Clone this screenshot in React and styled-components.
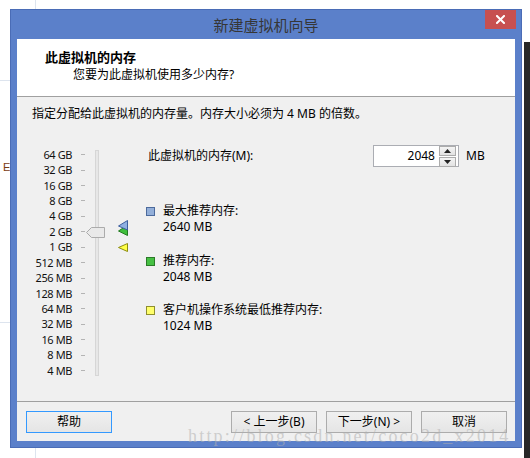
import React from "react";
import styled, { createGlobalStyle } from "styled-components";

const GlobalStyle = createGlobalStyle`
  html, body {
    margin: 0;
    padding: 0;
    background: #fff;
    overflow: hidden;
  }
  body {
    font-family: "Noto Sans", "Noto Sans CJK SC", sans-serif;
    font-size: 12px;
    color: #000;
  }
`;

const SIZES = [
  "64 GB", "32 GB", "16 GB", "8 GB", "4 GB", "2 GB", "1 GB",
  "512 MB", "256 MB", "128 MB", "64 MB", "32 MB", "16 MB", "8 MB", "4 MB",
];

const LEGEND = [
  { label: "最大推荐内存:", value: "2640 MB", fill: "#93afd9", edge: "#4c6a9c" },
  { label: "推荐内存:", value: "2048 MB", fill: "#46c043", edge: "#2b7a28" },
  { label: "客户机操作系统最低推荐内存:", value: "1024 MB", fill: "#ffff6a", edge: "#8f8f2e" },
];

function CloseIcon() {
  return (
    <svg width="9" height="9" viewBox="0 0 9 9">
      <path d="M1 1 L8 8 M8 1 L1 8" stroke="#fff" strokeWidth="2" strokeLinecap="square" />
    </svg>
  );
}

function Thumb() {
  return (
    <svg width="19" height="11" viewBox="0 0 19 11">
      <polygon points="0.5,5.5 5.5,0.5 18.5,0.5 18.5,10.5 5.5,10.5" fill="#e9e9e9" stroke="#ababab" />
    </svg>
  );
}

function MaxMarker() {
  return (
    <svg width="10" height="16" viewBox="0 0 10 16">
      <polygon points="9.5,5 0.5,11 9.5,15.5" fill="#3fbf3c" stroke="#237a20" />
      <polygon points="9.5,0.5 0.5,6 9.5,10" fill="#8fb0e2" stroke="#3d5f9e" />
    </svg>
  );
}

function MinMarker() {
  return (
    <svg width="10" height="9" viewBox="0 0 10 9">
      <polygon points="9.5,0.5 0.5,4.5 9.5,8.5" fill="#ffff45" stroke="#8c8c10" />
    </svg>
  );
}

function SpinArrow({ up }) {
  return (
    <svg width="7" height="4" viewBox="0 0 7 4">
      <polygon points={up ? "0,4 3.5,0 7,4" : "0,0 3.5,4 7,0"} fill="#222" />
    </svg>
  );
}

export default function App() {
  return (
    <Page>
      <GlobalStyle />
      <Stray>E</Stray>
      <Window>
        <TitleBar>
          <Title>新建虚拟机向导</Title>
          <CloseButton>
            <CloseIcon />
          </CloseButton>
        </TitleBar>
        <Content>
          <Header>
            <HeaderTitle>此虚拟机的内存</HeaderTitle>
            <HeaderSub>您要为此虚拟机使用多少内存?</HeaderSub>
          </Header>
          <Body>
            <Intro>指定分配给此虚拟机的内存量。内存大小必须为 4 MB 的倍数。</Intro>
            <Main>
              <SliderArea>
                <Scale>
                  {SIZES.map((s) => (
                    <ScaleRow key={s}>
                      <ScaleLabel>{s}</ScaleLabel>
                      <Tick />
                    </ScaleRow>
                  ))}
                </Scale>
                <Track>
                  <ThumbSlot>
                    <Thumb />
                  </ThumbSlot>
                </Track>
                <Markers>
                  <MaxMarker />
                  <MinSlot>
                    <MinMarker />
                  </MinSlot>
                </Markers>
              </SliderArea>
              <RightPane>
                <MemoryRow>
                  <MemoryLabel>此虚拟机的内存(M):</MemoryLabel>
                  <Spinner>
                    <SpinValue>2048</SpinValue>
                    <SpinButtons>
                      <SpinButton>
                        <SpinArrow up />
                      </SpinButton>
                      <SpinButton>
                        <SpinArrow />
                      </SpinButton>
                    </SpinButtons>
                  </Spinner>
                  <Unit>MB</Unit>
                </MemoryRow>
                <Legend>
                  {LEGEND.map((item) => (
                    <LegendItem key={item.label}>
                      <Swatch $fill={item.fill} $edge={item.edge} />
                      <LegendText>
                        <div>{item.label}</div>
                        <div>{item.value}</div>
                      </LegendText>
                    </LegendItem>
                  ))}
                </Legend>
              </RightPane>
            </Main>
          </Body>
          <Footer>
            <Button $focused>帮助</Button>
            <Spacer />
            <ButtonGroup>
              <Button>&lt; 上一步(B)</Button>
              <Button>下一步(N) &gt;</Button>
              <Button>取消</Button>
            </ButtonGroup>
          </Footer>
        </Content>
      </Window>
      <BackWindow />
      <Watermark>http://blog.csdn.net/coco2d_x2014</Watermark>
    </Page>
  );
}

const Page = styled.div`
  position: relative;
  width: 530px;
  height: 458px;
  overflow: hidden;
  display: flex;
  align-items: flex-start;
  background:
    linear-gradient(#dde4ee, #dde4ee) 35px 0 / 1px 100% no-repeat,
    linear-gradient(#dde4ee, #dde4ee) 0 80px / 10px 1px no-repeat,
    linear-gradient(#dde4ee, #dde4ee) 0 322px / 10px 1px no-repeat,
    #fff;
`;

const Stray = styled.span`
  position: absolute;
  left: 3px;
  top: 161px;
  font-family: "Liberation Sans", sans-serif;
  font-size: 11px;
  color: #7a3b12;
`;

const Window = styled.div`
  margin: 9px 0 0 10px;
  width: 512px;
  height: 439px;
  box-sizing: border-box;
  border: 1px solid #4a6cb6;
  background: #5b80ca;
  padding: 0 6px 6px 6px;
  display: flex;
  flex-direction: column;
`;

const TitleBar = styled.div`
  height: 29px;
  display: grid;
  grid-template-columns: 1fr auto 1fr;
  align-items: center;
`;

const Title = styled.div`
  grid-column: 2;
  font-size: 15px;
  line-height: 20px;
  color: #363636;
`;

const CloseButton = styled.div`
  grid-column: 3;
  justify-self: end;
  align-self: start;
  margin-right: -1px;
  width: 31px;
  height: 19px;
  background: #c75050;
  display: flex;
  align-items: center;
  justify-content: center;
`;

const Content = styled.div`
  flex: 1;
  background: #f0f0f0;
  display: flex;
  flex-direction: column;
`;

const Header = styled.div`
  height: 57px;
  box-sizing: content-box;
  background: #fff;
  border-bottom: 1px solid #a0a0a0;
  padding-left: 28px;
`;

const HeaderTitle = styled.div`
  margin-top: 10px;
  font-size: 13px;
  font-weight: bold;
  line-height: 16px;
`;

const HeaderSub = styled.div`
  margin: 2px 0 0 28px;
  font-size: 12px;
  line-height: 16px;
`;

const Body = styled.div`
  flex: 1;
  padding: 9px 0 0 15px;
`;

const Intro = styled.div`
  line-height: 16px;
`;

const Main = styled.div`
  margin-top: 23px;
  display: flex;
  align-items: flex-start;
`;

const SliderArea = styled.div`
  margin-top: 2px;
  display: flex;
  align-items: flex-start;
`;

const Scale = styled.div`
  display: flex;
  flex-direction: column;
`;

const ScaleRow = styled.div`
  height: 15.43px;
  display: flex;
  align-items: center;
`;

const ScaleLabel = styled.span`
  width: 40px;
  text-align: right;
  font-size: 11px;
  letter-spacing: -0.4px;
  line-height: 14px;
  color: #111;
  white-space: nowrap;
`;

const Tick = styled.span`
  margin-left: 9px;
  width: 4px;
  height: 1px;
  background: #b4b4b4;
`;

const Track = styled.div`
  position: relative;
  margin: 3px 0 0 10px;
  width: 4px;
  height: 226px;
  box-sizing: border-box;
  border: 1px solid #d6d6d6;
  background: #e7e7e7;
`;

const ThumbSlot = styled.div`
  position: absolute;
  left: -10px;
  top: 76px;
  line-height: 0;
`;

const Markers = styled.div`
  margin: 73px 0 0 19px;
  display: flex;
  flex-direction: column;
  line-height: 0;
`;

const MinSlot = styled.div`
  margin-top: 7px;
`;

const RightPane = styled.div`
  margin-left: 18px;
  display: flex;
  flex-direction: column;
`;

const MemoryRow = styled.div`
  height: 22px;
  display: flex;
  align-items: center;
`;

const MemoryLabel = styled.span`
  width: 225px;
  padding-left: 2px;
  line-height: 16px;
`;

const Spinner = styled.div`
  width: 86px;
  height: 22px;
  box-sizing: border-box;
  border: 1px solid #abadb3;
  background: #fff;
  display: flex;
  align-items: center;
`;

const SpinValue = styled.span`
  flex: 1;
  text-align: right;
  padding-right: 4px;
  line-height: 16px;
`;

const SpinButtons = styled.div`
  margin-right: 2px;
  display: flex;
  flex-direction: column;
  gap: 1px;
`;

const SpinButton = styled.div`
  width: 15px;
  height: 8px;
  border: 1px solid #acacac;
  background: linear-gradient(#f4f4f4, #e2e2e2);
  display: flex;
  align-items: center;
  justify-content: center;
`;

const Unit = styled.span`
  margin-left: 7px;
  line-height: 16px;
`;

const Legend = styled.div`
  margin-top: 36px;
  display: flex;
  flex-direction: column;
  gap: 17.5px;
`;

const LegendItem = styled.div`
  display: flex;
  align-items: flex-start;
  gap: 8px;
`;

const Swatch = styled.span`
  margin-top: 4px;
  width: 9px;
  height: 9px;
  box-sizing: border-box;
  border: 1px solid ${(p) => p.$edge};
  background: ${(p) => p.$fill};
`;

const LegendText = styled.div`
  line-height: 16px;
`;

const Footer = styled.div`
  height: 39px;
  border-top: 1px solid #a0a0a0;
  box-sizing: content-box;
  padding: 0 8px 0 9px;
  display: flex;
  align-items: flex-start;
`;

const Spacer = styled.div`
  flex: 1;
`;

const ButtonGroup = styled.div`
  display: flex;
  gap: 9px;
`;

const Button = styled.div`
  margin-top: 9px;
  width: 86px;
  height: 22px;
  box-sizing: border-box;
  border: 1px solid ${(p) => (p.$focused ? "#3399ff" : "#acacac")};
  background: linear-gradient(#f0f0f0, #e5e5e5);
  display: flex;
  align-items: center;
  justify-content: center;
  font-size: 12px;
  line-height: 16px;
  white-space: nowrap;
`;

const BackWindow = styled.div`
  margin: 42px 0 0 2px;
  width: 6px;
  height: 416px;
  background: #282828;
`;

const Watermark = styled.div`
  position: absolute;
  left: 188px;
  top: 426px;
  font-family: "Liberation Serif", serif;
  font-size: 18px;
  letter-spacing: 2.2px;
  line-height: 20px;
  color: rgba(175, 175, 175, 0.55);
  white-space: nowrap;
  pointer-events: none;
`;
